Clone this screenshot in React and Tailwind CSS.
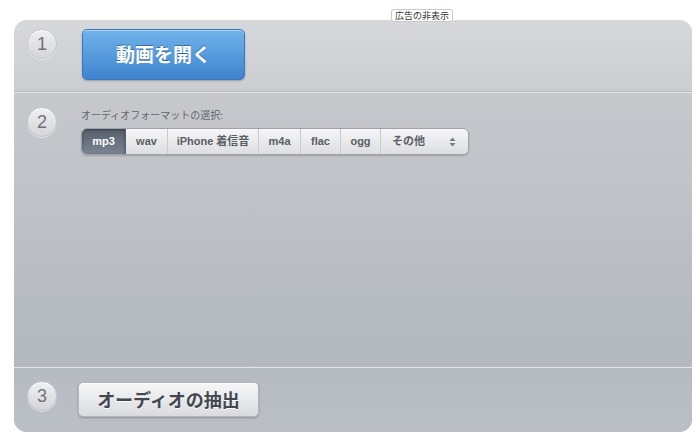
import React from 'react';

const JP = { fontFamily: '"Noto Sans CJK JP", "Liberation Sans", sans-serif' };

const formats = ['mp3', 'wav', 'iPhone 着信音', 'm4a', 'flac', 'ogg'];
const widths = ['w-[44px]', 'w-[42px]', 'w-[91px]', 'w-[42px]', 'w-[40px]', 'w-[40px]'];

const Step = ({ n }) => (
  <div className="w-[30px] h-[30px] flex-shrink-0 rounded-full flex items-center justify-center text-[18px] text-[#6f737a] bg-gradient-to-b from-[#eef0f2] to-[#d4d6da] border border-[#c4c7cc] shadow-[inset_0_1px_0_#fff,0_1px_0_rgba(255,255,255,0.5)] font-['Liberation_Sans',sans-serif]">
    {n}
  </div>
);

const Divider = () => (
  <div>
    <div className="h-px bg-[#b7babf]" />
    <div className="h-px bg-[#e3e5e8]" />
  </div>
);

export default function App() {
  return (
    <div className="relative w-[700px] h-[437px] bg-white overflow-hidden" style={JP}>
      {/* ad toggle */}
      <div className="absolute left-[391px] top-[9px] z-10 h-[13px] px-[3px] flex items-center text-[9px] leading-none text-[#333] bg-white border border-[#c9c9c9] rounded-[3px]">
        広告の非表示
      </div>

      <div className="pt-[20px] pl-[14px]">
        <div className="w-[678px] h-[412px] rounded-[13px] overflow-hidden flex flex-col bg-gradient-to-b from-[#d6d7da] via-[#bcc0c6] to-[#b7bcc3]">
          {/* step 1 */}
          <div className="h-[71px] flex items-start pt-[9px] pl-[13px] gap-[25px] bg-gradient-to-b from-[#d7d8db] to-[#cbcdd0]">
            <Step n="1" />
            <button className="w-[163px] h-[51px] rounded-[5px] text-white text-[19px] font-bold bg-gradient-to-b from-[#6fb3ea] to-[#3f83cf] border border-[#3b78bf] shadow-[inset_0_1px_0_rgba(255,255,255,0.45),0_1px_2px_rgba(0,0,0,0.25)] [text-shadow:0_-1px_0_rgba(0,0,0,0.35)]">
              動画を開く
            </button>
          </div>
          <Divider />

          {/* step 2 */}
          <div className="flex-1 flex items-start pt-[14px] pl-[13px] gap-[24px] bg-gradient-to-b from-[#c6c8cc] to-[#b3b8bf]">
            <Step n="2" />
            <div className="flex flex-col">
              <div className="text-[10px] leading-[14px] text-[#62666c] mt-[1px]">オーディオフォーマットの選択:</div>
              <div className="mt-[6px] flex h-[27px] w-[388px] rounded-[6px] border border-[#9ea3aa] overflow-hidden shadow-[0_1px_2px_rgba(0,0,0,0.2)] font-['Liberation_Sans','Noto_Sans_CJK_JP',sans-serif] text-[11px] font-bold">
                {formats.map((f, i) => (
                  <div
                    key={f}
                    className={
                      i === 0
                        ? `${widths[i]} flex items-center justify-center text-white bg-gradient-to-b from-[#56606c] to-[#7b8591] shadow-[inset_0_1px_3px_rgba(0,0,0,0.4)] border-r border-[#5b626c]`
                        : `${widths[i]} flex items-center justify-center text-[#5a5e64] bg-gradient-to-b from-[#f6f6f7] to-[#dcdee1] border-r border-[#c8cbd0]`
                    }
                  >
                    {f}
                  </div>
                ))}
                <div className="flex-1 flex items-center justify-between pl-[11px] pr-[12px] text-[#5a5e64] bg-gradient-to-b from-[#f6f6f7] to-[#dcdee1]">
                  <span>その他</span>
                  <svg width="7" height="10" viewBox="0 0 7 10" fill="#777b82">
                    <path d="M3.5 0.5 L6.5 4 H0.5 Z" />
                    <path d="M3.5 9.5 L6.5 6 H0.5 Z" />
                  </svg>
                </div>
              </div>
            </div>
          </div>
          <Divider />

          {/* step 3 */}
          <div className="h-[64px] flex items-start pt-[13px] pl-[13px] gap-[21px] bg-gradient-to-b from-[#b6bac1] to-[#bbc0c6]">
            <Step n="3" />
            <button className="mt-[1px] w-[181px] h-[35px] rounded-[5px] text-[#434850] text-[18px] font-bold bg-gradient-to-b from-[#f7f7f8] to-[#d9dbde] border border-[#b3b6bb] shadow-[inset_0_1px_0_#fff,0_1px_2px_rgba(0,0,0,0.25)] [text-shadow:0_1px_0_rgba(255,255,255,0.8)]">
              オーディオの抽出
            </button>
          </div>
        </div>
      </div>
    </div>
  );
}
